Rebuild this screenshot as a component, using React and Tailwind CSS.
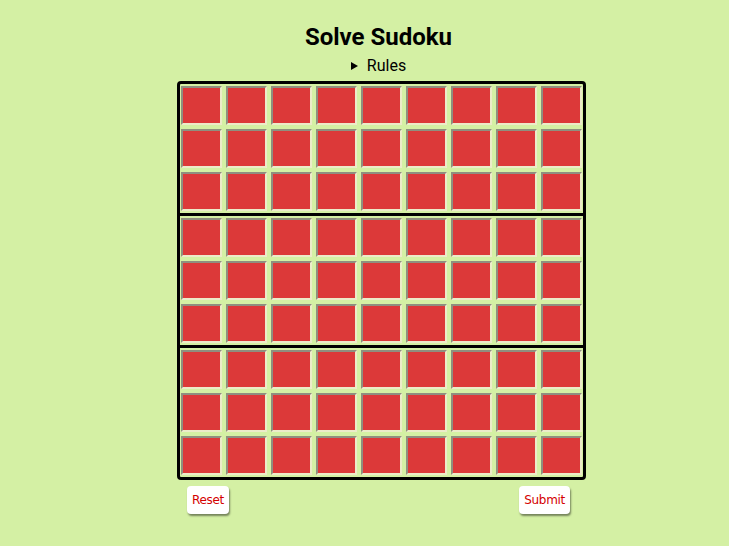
import React from "react";

const bands = [0, 1, 2];
const rows = [0, 1, 2];
const cols = [0, 1, 2, 3, 4, 5, 6, 7, 8];

function Cell() {
  return (
    <input
      type="text"
      readOnly
      className="w-[41px] h-[39px] bg-[#dc3939] border-2 border-t-[#8f8f7f] border-l-[#8f8f7f] border-b-[#ecebc9] border-r-[#ecebc9] outline-none"
    />
  );
}

export default function App() {
  return (
    <div
      className="min-h-[546px] w-full bg-[#d4f0a4] flex flex-col items-center pl-[34px]"
      style={{ fontFamily: "Roboto, 'Liberation Sans', sans-serif" }}
    >
      <h1 className="mt-[23px] -ml-[6px] text-[24px] leading-[28px] font-bold text-black">
        Solve Sudoku
      </h1>
      <details className="mt-[5px] -ml-[6px] text-[16px] leading-[20px] text-black">
        <summary className="cursor-pointer list-none flex items-center [&::-webkit-details-marker]:hidden">
          <span className="inline-block w-0 h-0 border-y-[4px] border-y-transparent border-l-[7px] border-l-black mr-[9px]" />
          Rules
        </summary>
      </details>
      <div className="mt-[5px] w-[409px] border-[3px] border-black rounded-[4px] flex flex-col">
        {bands.map((b) => (
          <div
            key={b}
            className={
              b < 2
                ? "px-[1px] py-[2px] flex flex-col gap-[4px] border-b-[3px] border-black"
                : "px-[1px] py-[2px] flex flex-col gap-[4px]"
            }
          >
            {rows.map((r) => (
              <div key={r} className="flex gap-[4px]">
                {cols.map((c) => (
                  <Cell key={c} />
                ))}
              </div>
            ))}
          </div>
        ))}
      </div>
      <div
        className="mt-[6px] w-[409px] flex justify-between pl-[10px] pr-[16px]"
        style={{ fontFamily: "'DejaVu Sans', Verdana, sans-serif" }}
      >
        <button className="h-[28px] px-[5px] bg-white rounded-[4px] text-[12px] tracking-[-0.3px] text-[#d40000] shadow-[1px_2px_2px_rgba(0,0,0,0.45)]">
          Reset
        </button>
        <button className="h-[28px] px-[5px] bg-white rounded-[4px] text-[12px] tracking-[-0.3px] text-[#d40000] shadow-[1px_2px_2px_rgba(0,0,0,0.45)]">
          Submit
        </button>
      </div>
    </div>
  );
}
